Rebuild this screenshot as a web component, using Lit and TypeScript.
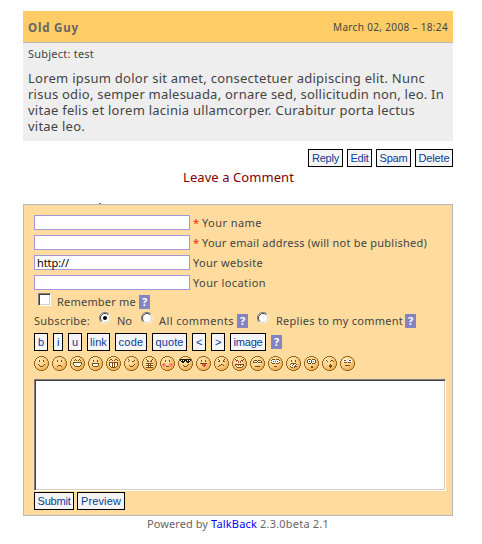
import { LitElement, html, svg, css } from "lit";
import { customElement, property } from "lit/decorators.js";

/** A line of text tracked out (or in) to a given width. */
@customElement("fit-text")
class FitText extends LitElement {
  @property({ type: Number }) w = 0;
  static styles = css`
    :host { display: inline-block; white-space: pre; flex: none; }
    span { display: inline-block; vertical-align: top; }
  `;
  render() {
    return html`<span><slot></slot></span>`;
  }
  firstUpdated() {
    const span = this.renderRoot.querySelector("span")!;
    const n = (this.textContent ?? "").length;
    const natural = span.getBoundingClientRect().width;
    if (n && this.w) {
      this.style.letterSpacing = `${(this.w - natural) / n}px`;
      this.style.width = `${this.w}px`;
    }
  }
}

const INK: Record<string, string> = {
  k: "#7c4c0c", w: "#ffffff", r: "#e8404c", p: "#f58c7c", b: "#1c1408", g: "#d8c8b0",
};

// Face features on an 11-column grid, starting at column 2, row 3 of the disc.
const FACES: string[][] = [
  ["", "...k...k", "...k...k", "", "", "..k.....k", "...k...k", "....kkk"],
  ["", "...k...k", "...k...k", "", "", "", "....kkk", "...k...k"],
  ["...k...k", "..k.k.k.k", "", ".kkkkkkkkk", ".kwwwwwwwk", ".kwwwwwwwk", "..kwwwwwk", "...kkkkk"],
  ["", "...k...k", "...k...k", "", "..kkkkkkk", "..kwwwwwk", "..kwwwwwk", "...kkkkk"],
  ["..kk...kk", ".k..k.k..k", "", ".kkkkkkkkk", ".kwwkwkwwk", ".kwwkwkwwk", ".kwwkwkwwk", "..kwkwkwk", "...kkkkk"],
  ["..k", "...k....k", "..k...kk", "", "", "........k", "...k...k", "....kkk"],
  ["..k.....k", "...k...k", "...kk.kk", "", "..kkkkkkk", "..wwkwkww", "..kkkkkkk", "..wwkwkww", "..kkkkkkk"],
  ["", "...k...k", "...k...k", "", ".pp.....pp", "prpp...pprp", "pppp...pppp", ".pp.kkk.pp"],
  ["bbbbbbbbbbb", "bwbwbbbwbwb", ".bbbb.bbbb", "..bb...bb", "", "........k", "...k...k", "....kkk"],
  ["", "...k...k", "...k...k", "", "..kkkkkkk", "....rrrr", "....rprr", ".....rr"],
  ["..k.....k", "...k...k", "..kk...kk", "", "", ".....kk", "...kk..k", "..k"],
  [".k.......k", "..kk...kk", "..rwk.kwr", "..wwr.rww", "", ".kkkkkkkkk", ".kwwkwkwwk", "..kwwwwwk", "...kkkkk"],
  ["", "..kkk.kkk", ".kwwwkwwwk", ".kkkk.kkkk", "..www.www", "", "", "...kkkkk"],
  ["..kkk.kkk", ".kwww.wwwk", ".wwkwkwkww", ".kwww.wwwk", "..kkk.kkk", "", "", "....kkk"],
  ["", "...k...k", "...k...k", "", "...kkkkk", "..kwwkwwk", "..wwkwwkw", "..kwwwkkk", "...kk.k"],
  ["..kkk.kkk", ".kwwwkwwwk", ".kwkwkwkwk", ".kwwwkwwwk", "..kkk.kkk", "", "", ".....kk", ".....kk"],
  ["", "..k....kk", "...k..k..k", "", "", "......k", ".....kkk", ".....kkk", "......k"],
  [".gww...wwg", ".wkkw.wkkw", ".wwww.wwww", "..kkk.kkk", "", "", "...kkkkk"],
];

const RIM: [number, number, number, number][] = [
  [5, 0, 5, 1], [3, 1, 2, 1], [10, 1, 2, 1], [2, 2, 1, 1], [12, 2, 1, 1], [1, 3, 1, 2], [13, 3, 1, 2],
  [0, 5, 1, 5], [14, 5, 1, 5], [1, 10, 1, 2], [13, 10, 1, 2], [2, 12, 1, 1], [12, 12, 1, 1],
  [3, 13, 2, 1], [10, 13, 2, 1], [5, 14, 5, 1],
];

@customElement("smiley-face")
class SmileyFace extends LitElement {
  @property({ attribute: false }) face: string[] = [];
  static styles = css`
    :host { display: block; width: 15px; height: 15px; }
    svg { display: block; }
  `;
  render() {
    return html`<svg width="15" height="15" viewBox="0 0 15 15" shape-rendering="crispEdges">
      <defs>
        <radialGradient id="skin" cx="0.36" cy="0.3" r="0.8">
          <stop offset="0" stop-color="#ffe9b8"></stop>
          <stop offset="0.5" stop-color="#fbcf82"></stop>
          <stop offset="1" stop-color="#e29a3a"></stop>
        </radialGradient>
      </defs>
      <path fill="url(#skin)" d="M5 0h5v1h2v1h1v1h1v2h1v5h-1v2h-1v1h-1v1h-2v1h-5v-1h-2v-1h-1v-1h-1v-2h-1v-5h1v-2h1v-1h1v-1h2z"></path>
      ${RIM.map(([x, y, w, h]) => svg`<rect x=${x} y=${y} width=${w} height=${h} fill="#9c6820"></rect>`)}
      ${this.face.map((row, y) =>
        [...row].map((c, x) => (INK[c] ? svg`<rect x=${x + 2} y=${y + 3} width="1" height="1" fill=${INK[c]}></rect>` : null))
      )}
    </svg>`;
  }
}

const FORMAT: [string, number, number][] = [
  ["b", 14, 6], ["i", 10, 2], ["u", 14, 6], ["link", 23, 17], ["code", 32, 25],
  ["quote", 35, 28], ["<", 14, 6], [">", 14, 6], ["image", 36, 29],
];

@customElement("app-root")
class AppRoot extends LitElement {
  static styles = css`
    :host {
      display: block; width: 482px; height: 544px; overflow: hidden; background: #fff;
      font-family: "Noto Sans", sans-serif; font-size: 11px; color: #444;
    }
    * { box-sizing: border-box; }
    .page { width: 430px; margin-left: 23px; padding-top: 11px; }
    .head {
      height: 32px; background: #fc6; border-bottom: 1px solid #b5b5b5; display: flex;
      justify-content: space-between; align-items: center; padding: 1px 5px 0;
    }
    .name { font-weight: bold; font-size: 11.5px; color: #666; }
    .date { font-size: 10px; }
    .body { height: 98px; background: #eee; padding: 3px 5px 0; }
    .subject { height: 16px; line-height: 16px; }
    .text { font-size: 13px; line-height: 16px; margin-top: 8px; display: flex; flex-direction: column; }
    .row { display: flex; }
    .actions { justify-content: flex-end; gap: 4px; margin-top: 8px; }
    .btn {
      height: 18px; border: 1px solid #000; background: #f5f5f5; color: #0a3a9c; flex: none; overflow: hidden;
      font: 11px/17px "Liberation Sans", sans-serif; display: flex; justify-content: center; padding: 0; margin: 0;
    }
    .leave { font-size: 13px; line-height: 20px; height: 20px; color: #800000; margin: 0 0 0 160px; }
    .speck { width: 2px; height: 1px; background: #777; margin: 16px 0 0 76px; }
    .form { height: 312px; border: 1px solid #b8b8b8; background: #ffdc9e; padding: 10px 6px 0 10px; }
    .field { height: 20px; gap: 3px; }
    .input {
      width: 156px; height: 15px; border: 1px solid #a295d8; background: #fff; color: #000;
      line-height: 14px; padding-left: 2px;
    }
    .label { line-height: 16px; }
    .star { color: #f02010; width: 6px; margin-right: 3px; line-height: 16px; }
    .q {
      width: 11px; height: 14px; background: #8484c2; color: #fff; font-weight: bold; font-size: 11px;
      line-height: 14px; text-align: center; flex: none;
    }
    .remember { height: 17px; padding-left: 4px; }
    .check {
      width: 13px; height: 13px; margin: -2px 6px 0 0; background: #fff; border: 1px solid; border-color: #808080 #fff #fff #808080;
      box-shadow: inset 1px 1px #404040, inset -1px -1px #d4d0c8;
    }
    .remember .label, .subscribe .label { line-height: 14px; }
    .remember .q { margin-left: 3px; }
    .subscribe { height: 20px; margin-top: 2px; }
    .radio { width: 12px; height: 12px; margin-top: -2px; flex: none; }
    .radio svg { display: block; }
    .formats { height: 18px; margin-top: -1px; }
    .formats .btn { margin-right: 5px; }
    .formats .q { margin-top: 2px; }
    .faces { gap: 3px; margin-top: 5px; }
    .area {
      width: 412px; height: 112px; margin-top: 8px; background: #fff; border: 1px solid;
      border-color: #808080 #fff #fff #808080; box-shadow: inset 1px 1px #404040, inset -1px -1px #d4d0c8;
    }
    .send { gap: 3px; margin-top: 1px; }
    .foot { line-height: 16px; color: #666; margin-left: 124px; }
    .foot a { color: #00f; }
  `;

  private button(label: string, w: number, tw: number) {
    return html`<button class="btn" style="width:${w}px"><fit-text .w=${tw}>${label}</fit-text></button>`;
  }
  private label(text: string, w: number) {
    return html`<fit-text class="label" .w=${w}>${text}</fit-text>`;
  }
  private field(text: string, w: number, required = false, value = "") {
    return html`<div class="row field">
      <div class="input">${value ? html`<fit-text .w=${32}>${value}</fit-text>` : null}</div>
      <div class="row">${required ? html`<span class="star">*</span>` : null}${this.label(text, w)}</div>
    </div>`;
  }
  private radio(on = false) {
    return html`<span class="radio"><svg width="12" height="12" viewBox="0 0 12 12">
      <circle cx="6" cy="6" r="5.5" fill="#fff"></circle>
      <path d="M2 10A5.5 5.5 0 0 1 10 2" fill="none" stroke="#808080"></path>
      <path d="M2.8 9.2A4.5 4.5 0 0 1 9.2 2.8" fill="none" stroke="#404040"></path>
      <path d="M2.8 9.2A4.5 4.5 0 0 0 9.2 2.8" fill="none" stroke="#d4d0c8"></path>
      ${on ? svg`<circle cx="6" cy="6" r="2" fill="#000"></circle>` : null}
    </svg></span>`;
  }

  render() {
    return html`<div class="page">
      <div class="head">
        <fit-text class="name" .w=${51}>Old Guy</fit-text>
        <fit-text class="date" .w=${115}>March 02, 2008 – 18:24</fit-text>
      </div>
      <div class="body">
        <div class="subject"><fit-text .w=${66}>Subject: test</fit-text></div>
        <div class="text">
          <fit-text .w=${397}>Lorem ipsum dolor sit amet, consectetuer adipiscing elit. Nunc</fit-text>
          <fit-text .w=${416}>risus odio, semper malesuada, ornare sed, sollicitudin non, leo. In</fit-text>
          <fit-text .w=${387}>vitae felis et lorem lacinia ullamcorper. Curabitur porta lectus</fit-text>
          <fit-text .w=${57}>vitae leo.</fit-text>
        </div>
      </div>
      <div class="row actions">
        ${this.button("Reply", 35, 27)}${this.button("Edit", 25, 18)}${this.button("Spam", 35, 28)}${this.button("Delete", 38, 31)}
      </div>
      <div class="leave"><fit-text .w=${111}>Leave a Comment</fit-text></div>
      <div class="speck"></div>
      <div class="form">
        ${this.field("Your name", 60, true)}
        ${this.field("Your email address (will not be published)", 225, true)}
        ${this.field("Your website", 70, false, "http://")}
        ${this.field("Your location", 73)}
        <div class="row remember">
          <span class="check"></span>${this.label("Remember me", 79)}<span class="q">?</span>
        </div>
        <div class="row subscribe">
          ${this.label("Subscribe:", 56)}${this.label(" ", 9)}${this.radio(true)}
          ${this.label(" ", 6)}${this.label("No", 15)}${this.label(" ", 9)}${this.radio()}
          ${this.label(" ", 6)}${this.label("All comments", 75)}${this.label(" ", 3)}<span class="q">?</span>
          ${this.label(" ", 9)}${this.radio()}${this.label(" ", 7)}${this.label("Replies to my comment", 127)}${this.label(" ", 2)}<span class="q">?</span>
        </div>
        <div class="row formats">
          ${FORMAT.map(([t, w, tw]) => this.button(t, w, tw))}<span class="q">?</span>
        </div>
        <div class="row faces">${FACES.map((f) => html`<smiley-face .face=${f}></smiley-face>`)}</div>
        <div class="area"></div>
        <div class="row send">${this.button("Submit", 40, 33)}${this.button("Preview", 48, 40)}</div>
      </div>
      <div class="row foot">
        <fit-text .w=${64}>Powered by </fit-text><a><fit-text .w=${46}>TalkBack</fit-text></a><fit-text .w=${72}> 2.3.0beta 2.1</fit-text>
      </div>
    </div>`;
  }
}
